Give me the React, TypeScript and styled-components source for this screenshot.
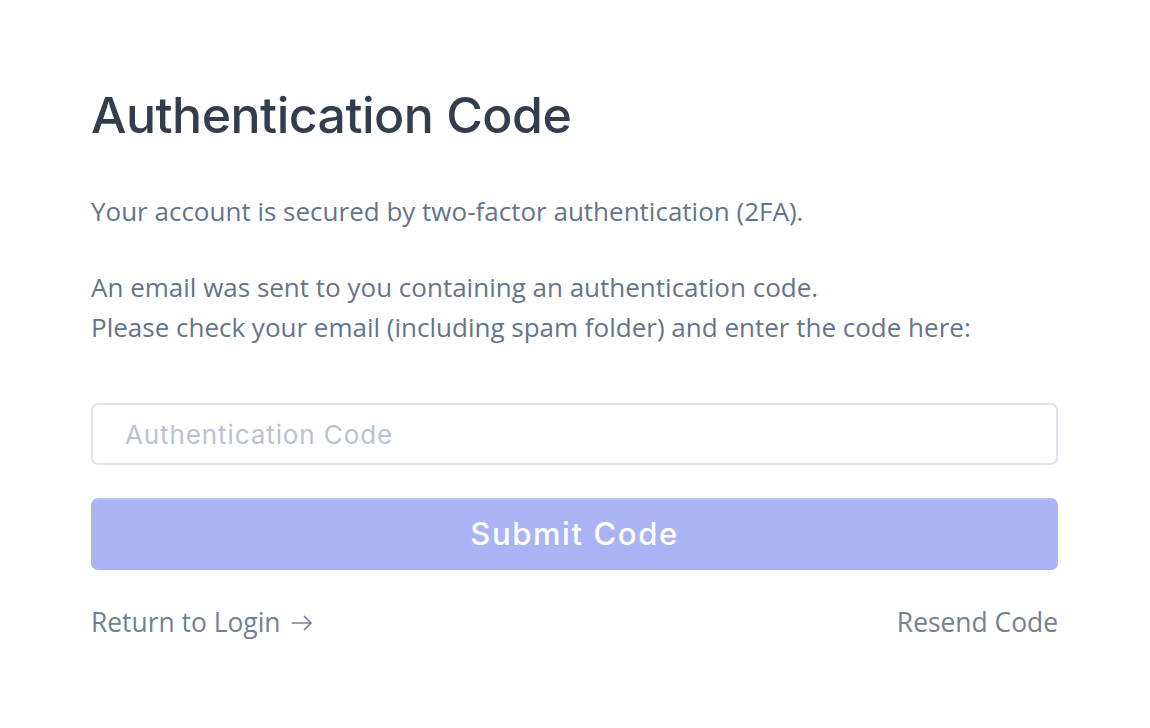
import React from "react";
import styled, { createGlobalStyle } from "styled-components";

const Global = createGlobalStyle`
  html, body { margin: 0; padding: 0; background: #ffffff; }
  * { box-sizing: border-box; }
`;

const Page = styled.main`
  padding: 85px 92px 40px 91px;
  font-family: "Open Sans", "Noto Sans", sans-serif;
`;

const Title = styled.h1`
  margin: 0 0 46px 0;
  font-family: Inter, "Noto Sans", sans-serif;
  font-weight: 500;
  font-size: 50px;
  line-height: 60px;
  letter-spacing: -0.5px;
  color: #343d4c;
`;

const Text = styled.p`
  margin: 0 0 36px 0;
  font-size: 26px;
  line-height: 40px;
  color: #64748b;
`;

const Form = styled.form`
  display: flex;
  flex-direction: column;
  gap: 33px;
  margin-top: 56px;
`;

const Input = styled.input`
  height: 62px;
  width: 100%;
  border: 2px solid #dfe5ee;
  border-radius: 7px;
  padding: 0 32px;
  font-family: Inter, "Noto Sans", sans-serif;
  font-size: 26px;
  letter-spacing: 0.9px;
  color: #343d4c;
  outline: none;
  &::placeholder { color: #b9c2d3; }
`;

const Button = styled.button`
  height: 72px;
  width: 100%;
  border: none;
  border-top: 2px solid #b6bff6;
  border-radius: 7px;
  padding: 0 0 4px 0;
  background: #aab4f5;
  color: #ffffff;
  font-family: Inter, "Noto Sans", sans-serif;
  font-weight: 500;
  font-size: 31px;
  letter-spacing: 1.6px;
`;

const Links = styled.div`
  display: flex;
  justify-content: space-between;
  align-items: center;
  margin-top: 32px;
`;

const LinkText = styled.a`
  display: inline-flex;
  align-items: center;
  gap: 10px;
  font-size: 26.4px;
  line-height: 40px;
  color: #718096;
  text-decoration: none;
`;

const ArrowIcon = styled.svg`
  width: 22px;
  height: 16px;
  margin-top: 2px;
  flex: none;
`;

export default function App() {
  return (
    <>
      <Global />
      <Page>
        <Title>Authentication Code</Title>
        <Text>Your account is secured by two-factor authentication (2FA).</Text>
        <Text>
          An email was sent to you containing an authentication code.
          <br />
          Please check your email (including spam folder) and enter the code here:
        </Text>
        <Form onSubmit={(e) => e.preventDefault()}>
          <Input placeholder="Authentication Code" />
          <Button type="submit">Submit Code</Button>
        </Form>
        <Links>
          <LinkText href="#">
            Return to Login
            <ArrowIcon viewBox="0 0 22 16" fill="none" stroke="currentColor" strokeWidth="1.7" strokeLinecap="round" strokeLinejoin="round">
              <path d="M1.5 8h18.5M13.5 1.5 20 8l-6.5 6.5" />
            </ArrowIcon>
          </LinkText>
          <LinkText href="#">Resend Code</LinkText>
        </Links>
      </Page>
    </>
  );
}
